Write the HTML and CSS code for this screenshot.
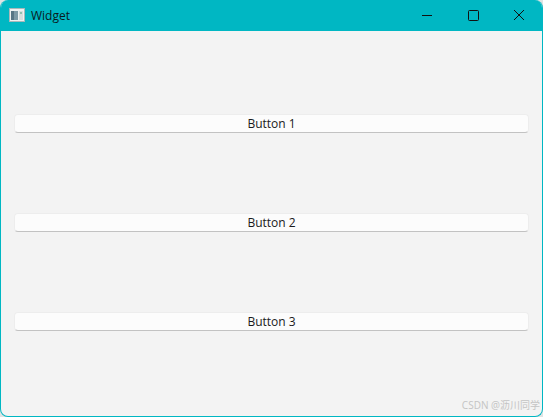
FILE: index.html
```html
<!DOCTYPE html>
<html lang="en">
<head>
  <meta charset="UTF-8">
  <meta name="viewport" content="width=device-width, initial-scale=1.0">
  <title>Widget</title>
  <link rel="stylesheet" href="styles.css">
</head>
<body>

  <div class="window">
    <header class="title-bar">
      <svg class="app-icon" width="16" height="14" viewBox="0 0 16 14">
        <rect x="0.5" y="0.5" width="15" height="13" fill="#eef1f1" stroke="#a9b8ba"/>
        <rect x="2" y="3" width="7" height="9" fill="#7d99a5"/>
        <rect x="2" y="3" width="3" height="9" fill="#587584"/>
        <rect x="10" y="3" width="4" height="9" fill="#d5dede"/>
        <rect x="11" y="4" width="2" height="2" fill="#8fbfae"/>
      </svg>
      <span class="title-text">Widget</span>
      <div class="window-controls">
        <button class="control" aria-label="Minimize">
          <svg width="12" height="12" viewBox="0 0 12 12"><path d="M1 6.5H11" stroke="#111" fill="none"/></svg>
        </button>
        <button class="control" aria-label="Maximize">
          <svg width="12" height="12" viewBox="0 0 12 12"><rect x="1.5" y="1.5" width="10" height="10" rx="1" stroke="#111" fill="none"/></svg>
        </button>
        <button class="control" aria-label="Close">
          <svg width="12" height="12" viewBox="0 0 12 12"><path d="M1 1L11 11M11 1L1 11" stroke="#111" fill="none"/></svg>
        </button>
      </div>
    </header>

    <main class="content">
      <button class="push-button">Button 1</button>
      <button class="push-button">Button 2</button>
      <button class="push-button">Button 3</button>
    </main>

    <div class="watermark">CSDN @沥川同学</div>
  </div>

</body>
</html>
```

FILE: styles.css
```css
html, body {
  height: 100%;
}

body {
  margin: 0;
  background-color: #dfe3e3;
  font-family: "Open Sans", "Noto Sans CJK SC", sans-serif;
  overflow: hidden;
}

.window {
  position: relative;
  box-sizing: border-box;
  height: 417px;
  display: flex;
  flex-direction: column;
  background-color: #f3f3f3;
  border: 1px solid #00b7c3;
  border-top: 0;
  border-radius: 8px;
  overflow: hidden;
}

.title-bar {
  flex: none;
  height: 31px;
  display: flex;
  align-items: center;
  background-color: #00b7c3;
  padding-left: 8px;
}

.app-icon {
  flex: none;
  margin-top: -2px;
}

.title-text {
  margin-left: 6px;
  margin-top: -1px;
  font-size: 12px;
  color: #0a1a1c;
}

.window-controls {
  margin-left: auto;
  display: flex;
  align-items: center;
}

.control {
  width: 46px;
  height: 31px;
  padding: 0 0 2px;
  border: 0;
  background: none;
  display: flex;
  align-items: center;
  justify-content: center;
}

.content {
  flex: 1;
  display: flex;
  flex-direction: column;
  justify-content: space-between;
  padding: 83px 13px 85px;
}

.push-button {
  box-sizing: border-box;
  height: 19px;
  padding: 0;
  background-color: #fcfcfc;
  border: 1px solid #ededed;
  border-bottom-color: #c2c2c2;
  border-radius: 4px;
  font-family: inherit;
  font-size: 12px;
  line-height: 16px;
  color: #1a1a1a;
}

/* sits over the window's bottom corner */
.watermark {
  position: absolute;
  right: 2px;
  bottom: 4px;
  font-size: 10px;
  line-height: 14px;
  color: #c4c4c4;
}
```
